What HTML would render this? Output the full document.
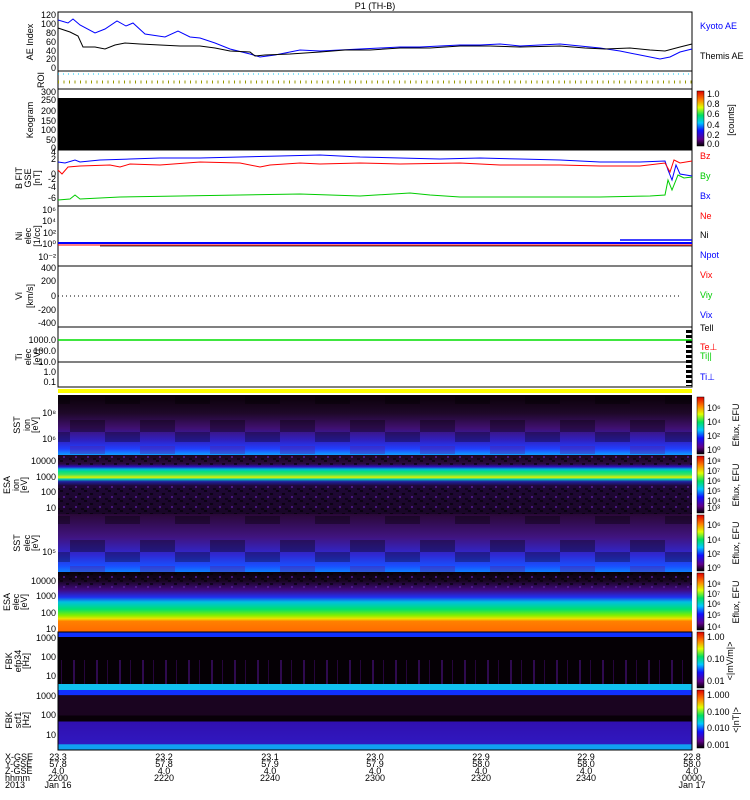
<!DOCTYPE html>
<html><head><meta charset="utf-8"><style>
body{margin:0;background:#fff;width:750px;height:800px;overflow:hidden}
svg{display:block}
text{font-family:"Liberation Sans",sans-serif;font-size:9px}
</style></head><body>
<svg width="750" height="800" viewBox="0 0 750 800" xmlns="http://www.w3.org/2000/svg">
<defs>
<linearGradient id="cb" x1="0" y1="1" x2="0" y2="0">
<stop offset="0" stop-color="#000"/><stop offset=".12" stop-color="#60008a"/><stop offset=".28" stop-color="#1010ff"/><stop offset=".42" stop-color="#00c8ff"/><stop offset=".56" stop-color="#00e060"/><stop offset=".7" stop-color="#e0ff00"/><stop offset=".84" stop-color="#ff8000"/><stop offset="1" stop-color="#e00000"/>
</linearGradient>
<linearGradient id="sst1" x1="0" y1="0" x2="0" y2="1">
<stop offset="0" stop-color="#0a0008"/><stop offset=".3" stop-color="#1e0828"/><stop offset=".55" stop-color="#401070"/><stop offset=".75" stop-color="#3020c0"/><stop offset=".9" stop-color="#2040ff"/><stop offset="1" stop-color="#10a0ff"/>
</linearGradient>
<linearGradient id="esa1" x1="0" y1="0" x2="0" y2="1">
<stop offset="0" stop-color="#1a0620"/><stop offset=".15" stop-color="#2a0a40"/><stop offset=".2" stop-color="#3010c0"/><stop offset=".24" stop-color="#00b0e0"/><stop offset=".28" stop-color="#00e080"/><stop offset=".33" stop-color="#40e060"/><stop offset=".38" stop-color="#e0f000"/><stop offset=".41" stop-color="#00d0b0"/><stop offset=".45" stop-color="#2020a0"/><stop offset=".52" stop-color="#200838"/><stop offset="1" stop-color="#1a0628"/>
</linearGradient>
<linearGradient id="sst2" x1="0" y1="0" x2="0" y2="1">
<stop offset="0" stop-color="#2a0838"/><stop offset=".4" stop-color="#401480"/><stop offset=".7" stop-color="#3028d0"/><stop offset=".9" stop-color="#1850ff"/><stop offset="1" stop-color="#1080ff"/>
</linearGradient>
<linearGradient id="esa2" x1="0" y1="0" x2="0" y2="1">
<stop offset="0" stop-color="#080008"/><stop offset=".15" stop-color="#1a0624"/><stop offset=".3" stop-color="#400a80"/><stop offset=".42" stop-color="#2030f0"/><stop offset=".5" stop-color="#00c0e0"/><stop offset=".62" stop-color="#00e070"/><stop offset=".72" stop-color="#80f000"/><stop offset=".78" stop-color="#f0e000"/><stop offset=".82" stop-color="#ff8000"/><stop offset="1" stop-color="#ff6a00"/>
</linearGradient>
<linearGradient id="fbk2" x1="0" y1="0" x2="0" y2="1">
<stop offset="0" stop-color="#1030ff"/><stop offset=".08" stop-color="#1030ff"/><stop offset=".09" stop-color="#1a0420"/><stop offset=".42" stop-color="#1a0420"/><stop offset=".43" stop-color="#080008"/><stop offset=".52" stop-color="#080008"/><stop offset=".53" stop-color="#3010b0"/><stop offset=".9" stop-color="#3018c0"/><stop offset=".91" stop-color="#10a0f0"/><stop offset="1" stop-color="#10a0f0"/>
</linearGradient>
<pattern id="blk" width="70" height="60" patternUnits="userSpaceOnUse">
<rect x="0" y="0" width="35" height="12" fill="#000" opacity=".35"/>
<rect x="35" y="12" width="35" height="10" fill="#000" opacity=".3"/>
<rect x="0" y="26" width="35" height="8" fill="#5020a0" opacity=".4"/>
<rect x="35" y="36" width="35" height="8" fill="#000" opacity=".35"/>
</pattern>
<pattern id="noise" width="12" height="10" patternUnits="userSpaceOnUse">
<rect x="0" y="0" width="3" height="2" fill="#000" opacity=".6"/>
<rect x="6" y="3" width="3" height="2" fill="#000" opacity=".6"/>
<rect x="3" y="6" width="2" height="2" fill="#5a20a0" opacity=".7"/>
<rect x="9" y="8" width="3" height="2" fill="#000" opacity=".5"/>
</pattern>
<pattern id="str" width="23" height="10" patternUnits="userSpaceOnUse">
<rect x="4" y="0" width="2" height="10" fill="#4a1080"/>
<rect x="15" y="0" width="1" height="10" fill="#3a0860"/>
</pattern>
<pattern id="tk" width="6" height="5" patternUnits="userSpaceOnUse">
<rect x="0" y="0" width="6" height="3" fill="#000"/>
</pattern>
</defs>

<text x="375" y="9" text-anchor="middle" font-size="10">P1 (TH-B)</text>

<rect x="58" y="12" width="634" height="59" fill="#fff" stroke="#000"/>
<polyline fill="none" stroke="#00f" stroke-width="1" points="58,20 68,23 73,19 80,25 95,33 105,29 117,21 126,26 133,23 145,34 165,37 178,31 190,37 200,38 215,43 230,49 250,54 260,57 275,55 290,52 300,50 320,51 340,50 360,49 380,48 400,47 420,47 440,46 460,45 480,45 500,44 520,46 540,45 560,44 580,46 600,48 620,51 640,55 660,59 670,57 680,52 692,49"/>
<polyline fill="none" stroke="#000" stroke-width="1" points="58,28 70,32 78,36 83,47 95,47 105,49 115,45 125,43 140,44 160,45 180,46 200,46 215,48 230,51 250,52 255,56 265,55 290,54 320,52 345,50 370,50 400,48 430,48 460,46 490,46 520,47 560,46 585,48 605,49 630,48 650,50 665,51 680,47 692,44"/>
<g font-size="8" text-anchor="end">
<text x="56" y="18">120</text><text x="56" y="27">100</text><text x="56" y="36">80</text><text x="56" y="45">60</text><text x="56" y="54">40</text><text x="56" y="62">20</text><text x="56" y="71">0</text></g>
<text transform="translate(33,42) rotate(-90)" text-anchor="middle">AE Index</text>
<text x="700" y="29" fill="#00f">Kyoto AE</text>
<text x="700" y="59">Themis AE</text>

<rect x="58" y="71" width="634" height="18" fill="#fff" stroke="#000"/>
<line x1="58" y1="74" x2="692" y2="74" stroke="#0cf" stroke-dasharray="1,4"/>
<line x1="58" y1="82" x2="692" y2="82" stroke="#990" stroke-width="3" stroke-dasharray="1,4.5"/>
<text transform="translate(44,80) rotate(-90)" text-anchor="middle" font-size="8">ROI</text>

<rect x="58" y="89" width="634" height="61" fill="#fff" stroke="#000"/>
<rect x="58" y="98" width="634" height="52" fill="#000"/>
<g font-size="8" text-anchor="end"><text x="56" y="95">300</text><text x="56" y="103">250</text><text x="56" y="114">200</text><text x="56" y="124">150</text><text x="56" y="133">100</text><text x="56" y="143">50</text><text x="56" y="151">0</text></g>
<text transform="translate(33,120) rotate(-90)" text-anchor="middle">Keogram</text>
<rect x="697" y="91" width="7" height="55" fill="url(#cb)" stroke="#000" stroke-width=".5"/>
<g font-size="8"><text x="707" y="97">1.0</text><text x="707" y="107">0.8</text><text x="707" y="117">0.6</text><text x="707" y="128">0.4</text><text x="707" y="138">0.2</text><text x="707" y="147">0.0</text></g>
<text transform="translate(734,120) rotate(-90)" text-anchor="middle" font-size="8">[counts]</text>

<rect x="58" y="150" width="634" height="56" fill="#fff" stroke="#000"/>
<polyline fill="none" stroke="#00f" points="58,162 65,163 75,160 80,162 100,160 130,159 160,158 200,158 240,157 280,156 320,155 360,157 400,158 440,159 480,158 520,159 560,160 600,162 640,162 665,161 668,170 672,180 676,165 680,174 692,176"/>
<polyline fill="none" stroke="#f00" points="58,170 62,174 68,167 80,166 110,165 120,167 130,164 160,165 200,162 240,163 260,167 270,165 300,163 320,164 360,163 400,164 460,163 500,165 560,165 600,166 640,166 665,163 670,172 674,160 680,163 692,161"/>
<polyline fill="none" stroke="#0c0" points="58,200 70,199 75,195 80,199 120,197 180,196 240,195 300,194 360,196 410,193 430,195 460,197 500,197 550,197 600,197 650,196 665,195 668,180 672,190 678,175 684,178 692,177"/>
<g font-size="8" text-anchor="end"><text x="56" y="155">4</text><text x="56" y="162">2</text><text x="56" y="177">0</text><text x="56" y="182">-2</text><text x="56" y="190">-4</text><text x="56" y="201">-6</text></g>
<text transform="translate(22,178) rotate(-90)" text-anchor="middle" font-size="8">B FIT</text>
<text transform="translate(31,178) rotate(-90)" text-anchor="middle" font-size="7">GSE</text>
<text transform="translate(40,178) rotate(-90)" text-anchor="middle" font-size="8">[nT]</text>
<text x="700" y="159" fill="#f00">Bz</text><text x="700" y="179" fill="#0c0">By</text><text x="700" y="199" fill="#00f">Bx</text>

<rect x="58" y="206" width="634" height="60" fill="#fff" stroke="#000"/>
<line x1="58" y1="243" x2="692" y2="243" stroke="#00f" stroke-width="2"/>
<line x1="58" y1="245" x2="692" y2="245" stroke="#f00" stroke-width="1"/>
<line x1="100" y1="246" x2="692" y2="246" stroke="#000" stroke-width=".8"/>
<line x1="620" y1="240" x2="692" y2="240" stroke="#00f" stroke-width="1.5"/>
<g font-size="8" text-anchor="end"><text x="56" y="213">10⁶</text><text x="56" y="224">10⁴</text><text x="56" y="236">10²</text><text x="56" y="247">10⁰</text><text x="56" y="260">10⁻²</text></g>
<text transform="translate(22,236) rotate(-90)" text-anchor="middle" font-size="8">Ni</text>
<text transform="translate(31,236) rotate(-90)" text-anchor="middle" font-size="7">elec</text>
<text transform="translate(40,236) rotate(-90)" text-anchor="middle" font-size="8">[1/cc]</text>
<text x="700" y="219" fill="#f00">Ne</text><text x="700" y="238">Ni</text><text x="700" y="258" fill="#00f">Npot</text>

<rect x="58" y="266" width="634" height="61" fill="#fff" stroke="#000"/>
<line x1="58" y1="296" x2="680" y2="296" stroke="#000" stroke-dasharray="1,3"/>
<g font-size="8" text-anchor="end"><text x="56" y="271">400</text><text x="56" y="284">200</text><text x="56" y="299">0</text><text x="56" y="313">-200</text><text x="56" y="326">-400</text></g>
<text transform="translate(22,296) rotate(-90)" text-anchor="middle" font-size="8">Vi</text>
<text transform="translate(33,296) rotate(-90)" text-anchor="middle" font-size="8">[km/s]</text>
<text x="700" y="278" fill="#f00">Vix</text><text x="700" y="298" fill="#0c0">Viy</text><text x="700" y="318" fill="#00f">Vix</text>

<rect x="58" y="327" width="634" height="60" fill="#fff" stroke="#000"/>
<rect x="686" y="328" width="6" height="58" fill="url(#tk)"/>
<line x1="58" y1="340" x2="692" y2="340" stroke="#0d0" stroke-width="1.5"/>
<line x1="58" y1="362" x2="692" y2="362" stroke="#000"/>
<g font-size="8" text-anchor="end"><text x="56" y="343">1000.0</text><text x="56" y="354">100.0</text><text x="56" y="365">10.0</text><text x="56" y="375">1.0</text><text x="56" y="385">0.1</text></g>
<text transform="translate(22,357) rotate(-90)" text-anchor="middle" font-size="8">Ti</text>
<text transform="translate(31,357) rotate(-90)" text-anchor="middle" font-size="7">elec</text>
<text transform="translate(40,357) rotate(-90)" text-anchor="middle" font-size="8">[eV]</text>
<text x="700" y="331">Tell</text><text x="700" y="350" fill="#f00">Te⊥</text><text x="700" y="359" fill="#0c0">Ti||</text><text x="700" y="380" fill="#00f">Ti⊥</text>

<rect x="58" y="389" width="634" height="4" fill="#ff0"/>

<rect x="58" y="395" width="634" height="60" fill="url(#sst1)"/>
<rect x="58" y="395" width="634" height="60" fill="url(#blk)"/>
<rect x="58" y="455" width="634" height="59" fill="url(#esa1)"/>
<rect x="58" y="455" width="634" height="11" fill="url(#noise)"/>
<rect x="58" y="486" width="634" height="28" fill="url(#noise)"/>
<rect x="58" y="514" width="634" height="58" fill="url(#sst2)"/>
<rect x="58" y="514" width="634" height="58" fill="url(#blk)"/>
<rect x="58" y="572" width="634" height="60" fill="url(#esa2)"/>
<rect x="58" y="572" width="634" height="16" fill="url(#noise)"/>
<rect x="58" y="632" width="634" height="58" fill="#050005"/>
<rect x="58" y="632" width="634" height="5" fill="#1030ff"/>
<rect x="58" y="660" width="634" height="24" fill="url(#str)" opacity=".6"/>
<rect x="58" y="684" width="634" height="6" fill="#10c0f0"/>
<rect x="58" y="690" width="634" height="60" fill="url(#fbk2)"/>
<rect x="58" y="632" width="634" height="118" fill="none" stroke="#000"/>

<g font-size="8" text-anchor="end">
<text x="56" y="416">10⁸</text><text x="56" y="442">10⁶</text>
<text x="56" y="464">10000</text><text x="56" y="480">1000</text><text x="56" y="495">100</text><text x="56" y="511">10</text>
<text x="56" y="555">10⁵</text>
<text x="56" y="584">10000</text><text x="56" y="599">1000</text><text x="56" y="616">100</text><text x="56" y="632">10</text>
<text x="56" y="641">1000</text><text x="56" y="660">100</text><text x="56" y="679">10</text>
<text x="56" y="699">1000</text><text x="56" y="718">100</text><text x="56" y="738">10</text>
</g>
<g font-size="8">
<text transform="translate(20,425) rotate(-90)" text-anchor="middle">SST</text><text transform="translate(30,425) rotate(-90)" text-anchor="middle" font-size="7">ion</text><text transform="translate(38,425) rotate(-90)" text-anchor="middle">[eV]</text>
<text transform="translate(10,485) rotate(-90)" text-anchor="middle">ESA</text><text transform="translate(19,485) rotate(-90)" text-anchor="middle" font-size="7">ion</text><text transform="translate(27,485) rotate(-90)" text-anchor="middle">[eV]</text>
<text transform="translate(20,543) rotate(-90)" text-anchor="middle">SST</text><text transform="translate(30,543) rotate(-90)" text-anchor="middle" font-size="7">elec</text><text transform="translate(38,543) rotate(-90)" text-anchor="middle">[eV]</text>
<text transform="translate(10,602) rotate(-90)" text-anchor="middle">ESA</text><text transform="translate(19,602) rotate(-90)" text-anchor="middle" font-size="7">elec</text><text transform="translate(27,602) rotate(-90)" text-anchor="middle">[eV]</text>
<text transform="translate(12,661) rotate(-90)" text-anchor="middle">FBK</text><text transform="translate(21,661) rotate(-90)" text-anchor="middle" font-size="7">efp34</text><text transform="translate(29,661) rotate(-90)" text-anchor="middle">[Hz]</text>
<text transform="translate(12,720) rotate(-90)" text-anchor="middle">FBK</text><text transform="translate(21,720) rotate(-90)" text-anchor="middle" font-size="7">scf1</text><text transform="translate(29,720) rotate(-90)" text-anchor="middle">[Hz]</text>
</g>

<g stroke="#000" stroke-width=".5">
<rect x="697" y="397" width="7" height="57" fill="url(#cb)"/>
<rect x="697" y="456" width="7" height="57" fill="url(#cb)"/>
<rect x="697" y="515" width="7" height="56" fill="url(#cb)"/>
<rect x="697" y="573" width="7" height="57" fill="url(#cb)"/>
<rect x="697" y="632" width="7" height="56" fill="url(#cb)"/>
<rect x="697" y="690" width="7" height="58" fill="url(#cb)"/>
</g>
<g font-size="8">
<text x="707" y="411">10⁶</text><text x="707" y="425">10⁴</text><text x="707" y="439">10²</text><text x="707" y="453">10⁰</text>
<text x="707" y="464">10⁸</text><text x="707" y="474">10⁷</text><text x="707" y="484">10⁶</text><text x="707" y="494">10⁵</text><text x="707" y="504">10⁴</text><text x="707" y="511">10³</text>
<text x="707" y="528">10⁶</text><text x="707" y="543">10⁴</text><text x="707" y="557">10²</text><text x="707" y="571">10⁰</text>
<text x="707" y="587">10⁸</text><text x="707" y="597">10⁷</text><text x="707" y="607">10⁶</text><text x="707" y="618">10⁵</text><text x="707" y="630">10⁴</text>
<text x="707" y="640">1.00</text><text x="707" y="662">0.10</text><text x="707" y="684">0.01</text>
<text x="707" y="698">1.000</text><text x="707" y="715">0.100</text><text x="707" y="731">0.010</text><text x="707" y="748">0.001</text>
<text transform="translate(739,425) rotate(-90)" text-anchor="middle">Eflux, EFU</text>
<text transform="translate(739,485) rotate(-90)" text-anchor="middle">Eflux, EFU</text>
<text transform="translate(739,543) rotate(-90)" text-anchor="middle">Eflux, EFU</text>
<text transform="translate(739,602) rotate(-90)" text-anchor="middle">Eflux, EFU</text>
<text transform="translate(733,661) rotate(-90)" text-anchor="middle">&lt;|mV/m|&gt;</text>
<text transform="translate(739,720) rotate(-90)" text-anchor="middle">&lt;|nT|&gt;</text>
</g>

<g font-size="8">
<text x="5" y="760">X-GSE</text><text x="5" y="767">Y-GSE</text><text x="5" y="774">Z-GSE</text><text x="5" y="781">hhmm</text><text x="5" y="788">2013</text>
</g>
<g font-size="8" text-anchor="middle">
<text x="58" y="760">23.3</text><text x="58" y="767">57.8</text><text x="58" y="774">4.0</text><text x="58" y="781">2200</text><text x="58" y="788">Jan 16</text>
<text x="164" y="760">23.2</text><text x="164" y="767">57.8</text><text x="164" y="774">4.0</text><text x="164" y="781">2220</text>
<text x="270" y="760">23.1</text><text x="270" y="767">57.9</text><text x="270" y="774">4.0</text><text x="270" y="781">2240</text>
<text x="375" y="760">23.0</text><text x="375" y="767">57.9</text><text x="375" y="774">4.0</text><text x="375" y="781">2300</text>
<text x="481" y="760">22.9</text><text x="481" y="767">58.0</text><text x="481" y="774">4.0</text><text x="481" y="781">2320</text>
<text x="586" y="760">22.9</text><text x="586" y="767">58.0</text><text x="586" y="774">4.0</text><text x="586" y="781">2340</text>
<text x="692" y="760">22.8</text><text x="692" y="767">58.0</text><text x="692" y="774">4.0</text><text x="692" y="781">0000</text><text x="692" y="788">Jan 17</text>
</g>
</svg>
</body></html>
